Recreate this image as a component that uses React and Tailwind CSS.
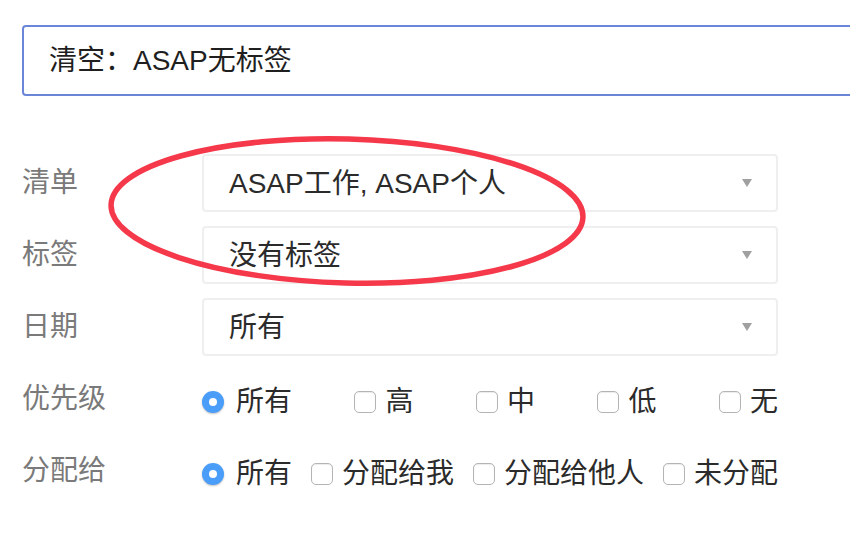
const font = { fontFamily: '"Liberation Sans", "Noto Sans CJK SC", sans-serif' };

function Select({ value }) {
  return (
    <div className="flex h-[58px] w-[576px] items-center justify-between rounded-[4px] border-2 border-[#efefef] bg-white pl-[25px] pr-[24px]">
      <span className="pt-[2px] text-[28px] leading-none text-[#2b2b2b]">{value}</span>
      <svg width="10" height="8" viewBox="0 0 10 8">
        <polygon points="0,0 10,0 5,8" fill="#a0a0a0" />
      </svg>
    </div>
  );
}

function Radio({ label }) {
  return (
    <div className="flex items-center gap-[12px]">
      <span className="flex h-[22px] w-[22px] items-center justify-center rounded-full bg-[#4a9df8] shadow-[0_1px_2px_rgba(0,0,0,0.25)]">
        <span className="h-[8px] w-[8px] rounded-full bg-white" />
      </span>
      <span className="text-[28px] leading-none text-[#2b2b2b]">{label}</span>
    </div>
  );
}

function Check({ label }) {
  return (
    <div className="flex items-center gap-[9px]">
      <span className="h-[22px] w-[22px] rounded-[5px] border border-[#b4b4b4] bg-white shadow-[inset_0_1px_1px_rgba(0,0,0,0.08)]" />
      <span className="text-[28px] leading-none text-[#2b2b2b]">{label}</span>
    </div>
  );
}

function Row({ label, children, first }) {
  return (
    <div className={`flex h-[58px] items-center ${first ? "" : "mt-[14px]"}`}>
      <div className="w-[180px] text-[28px] leading-none text-[#7a7a7a]">{label}</div>
      {children}
    </div>
  );
}

export default function App() {
  return (
    <div className="relative h-[540px] w-[850px] overflow-hidden bg-white" style={font}>
      <div className="pl-[22px] pt-[25px]">
        <div className="flex h-[71px] w-[860px] items-center rounded-[4px] border-2 border-[#6b86d9] pl-[25px]">
          <span className="text-[28px] leading-none text-[#1f1f1f]">清空：ASAP无标签</span>
        </div>

        <div className="mt-[58px]">
          <Row label="清单" first>
            <Select value="ASAP工作, ASAP个人" />
          </Row>
          <Row label="标签">
            <Select value="没有标签" />
          </Row>
          <Row label="日期">
            <Select value="所有" />
          </Row>
          <Row label="优先级">
            <div className="flex w-[576px] items-center justify-between pt-[5px]">
              <Radio label="所有" />
              <Check label="高" />
              <Check label="中" />
              <Check label="低" />
              <Check label="无" />
            </div>
          </Row>
          <Row label="分配给">
            <div className="flex w-[576px] items-center justify-between pt-[5px]">
              <Radio label="所有" />
              <Check label="分配给我" />
              <Check label="分配给他人" />
              <Check label="未分配" />
            </div>
          </Row>
        </div>
      </div>

      <svg className="pointer-events-none absolute left-0 top-0" width="850" height="540">
        <ellipse cx="347" cy="211" rx="236" ry="72" fill="none" stroke="#f5394b" strokeWidth="5.5" transform="rotate(1.5 347 211)" />
      </svg>
    </div>
  );
}
